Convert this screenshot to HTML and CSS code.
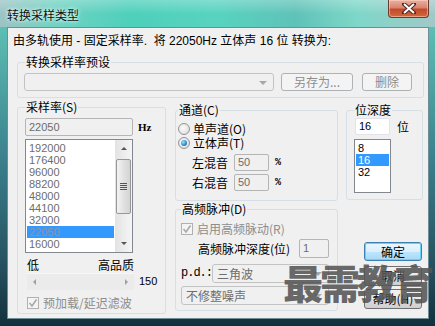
FILE: index.html
```html
<!DOCTYPE html>
<html>
<head>
<meta charset="utf-8">
<link rel="stylesheet" href="styles.css">
</head>
<body>
<div class="window">
  <div class="titlebar">
    <span class="title">转换采样类型</span>
    <div class="close">
      <svg width="14" height="11" viewBox="0 0 14 11">
        <path d="M2 1 L12 10 M12 1 L2 10" stroke="#4a2a24" stroke-width="4" stroke-linecap="square"/>
        <path d="M2 1 L12 10 M12 1 L2 10" stroke="#fff" stroke-width="2"/>
      </svg>
    </div>
  </div>

  <div class="client">
    <div class="msg">由多轨使用 - 固定采样率.&nbsp; 将 22050Hz 立体声 16 位 转换为:</div>

    <fieldset class="preset">
      <legend>转换采样率预设</legend>
      <div class="row">
        <div class="combo off preset-combo"><span class="arrow"></span></div>
        <button class="btn off save">另存为...</button>
        <button class="btn off del">删除</button>
      </div>
    </fieldset>

    <div class="main">
      <fieldset class="rate">
        <legend>采样率(S)</legend>
        <div class="row">
          <div class="field off rate-field">22050</div>
          <span class="unit">Hz</span>
        </div>
        <div class="listbox rate-list">
          <div class="items">
            <div class="item">192000</div>
            <div class="item">176400</div>
            <div class="item">96000</div>
            <div class="item">88200</div>
            <div class="item">48000</div>
            <div class="item">44100</div>
            <div class="item">32000</div>
            <div class="item selected">22050</div>
            <div class="item">16000</div>
          </div>
          <div class="vscroll">
            <div class="sbtn"><span class="tri up"></span></div>
            <div class="thumb"><span class="grip"></span></div>
            <div class="sbtn bottom"><span class="tri down"></span></div>
          </div>
        </div>
        <div class="quality">
          <span>低</span>
          <span>高品质</span>
        </div>
        <div class="row slider-row">
          <div class="hscroll">
            <span class="tri left"></span>
            <span class="tri right"></span>
          </div>
          <span class="value">150</span>
        </div>
        <label class="check off filter">
          <span class="box"><svg width="10" height="10" viewBox="0 0 10 10"><path d="M1.5 5 L4 8 L8.5 1.5" fill="none" stroke="#a9a9a9" stroke-width="1.6"/></svg></span>
          预加载/延迟滤波
        </label>
      </fieldset>

      <div class="col-mid">
        <fieldset class="channel">
          <legend>通道(C)</legend>
          <label class="radio-row"><span class="radio"></span>单声道(O)</label>
          <label class="radio-row"><span class="radio on"></span>立体声(T)</label>
          <div class="mix first">
            <span class="mix-label">左混音</span>
            <div class="field off mix-field">50</div>
            <span class="pct">%</span>
          </div>
          <div class="mix">
            <span class="mix-label">右混音</span>
            <div class="field off mix-field">50</div>
            <span class="pct">%</span>
          </div>
        </fieldset>

        <fieldset class="pulse">
          <legend>高频脉冲(D)</legend>
          <label class="check off dither">
            <span class="box"><svg width="10" height="10" viewBox="0 0 10 10"><path d="M1.5 5 L4 8 L8.5 1.5" fill="none" stroke="#a9a9a9" stroke-width="1.6"/></svg></span>
            启用高频脉动(R)
          </label>
          <div class="row depth-row">
            <span class="depth-label">高频脉冲深度(位)</span>
            <div class="field off depth-field">1</div>
          </div>
          <div class="row pd-row">
            <span class="pd">p.d.:</span>
            <div class="combo off pd-combo">三角波<span class="arrow"></span></div>
          </div>
          <div class="combo off shape-combo">不修整噪声<span class="arrow"></span></div>
        </fieldset>
      </div>

      <div class="col-right">
        <fieldset class="bits">
          <legend>位深度</legend>
          <div class="row">
            <div class="field bits-field">16</div>
            <span class="unit-bit">位</span>
          </div>
          <div class="listbox bits-list">
            <div class="items">
              <div class="item">8</div>
              <div class="item selected">16</div>
              <div class="item">32</div>
            </div>
          </div>
        </fieldset>
        <button class="btn default ok">确定</button>
        <button class="btn cancel">取消</button>
        <button class="btn help">帮助(H)</button>
      </div>
    </div>
  </div>

  <div class="watermark">最需教育</div>
</div>
</body>
</html>
```

FILE: styles.css
```css
* {
  box-sizing: border-box;
}
html, body {
  margin: 0;
  padding: 0;
}
body {
  width: 435px;
  height: 326px;
  overflow: hidden;
  font: 12px/14px "Liberation Sans", "Noto Sans CJK SC", sans-serif;
  color: #000;
}
.window {
  position: relative;
  width: 435px;
  height: 326px;
  padding: 0 6px 7px 7px;
  display: flex;
  flex-direction: column;
  background:
    linear-gradient(180deg, rgba(255,255,255,0.25) 0, rgba(255,255,255,0) 14px),
    linear-gradient(90deg, #9cc4c4 0, #72d2c3 12%, #4ed0bb 30%, #58d3c0 50%, #5fc2b8 68%, #7ed7c8 82%, #a2c8c8 100%);
}
.window::after {
  content: "";
  position: absolute;
  left: 0;
  right: 0;
  top: 27px;
  bottom: 0;
  z-index: 0;
  background: linear-gradient(180deg, #5cbfb4 0, #3a7f8c 45%, #27505f 80%, #12303c 100%);
}

/* title bar */
.titlebar {
  height: 27px;
  display: flex;
  align-items: flex-start;
  margin-right: -6px;
}
.title {
  margin-top: 8px;
  font-family: "Noto Sans CJK SC", sans-serif;
  font-size: 12px;
  line-height: 14px;
  color: #111;
  text-shadow: 0 0 5px #e6fff9, 0 0 3px #e6fff9;
}
.close {
  margin-left: auto;
  margin-right: 6px;
  width: 41px;
  height: 18px;
  border: 1px solid #6b3a30;
  border-top: none;
  border-radius: 0 0 4px 4px;
  background: linear-gradient(180deg, #eab3a3 0, #d98470 45%, #c24a2c 55%, #d2683c 100%);
  box-shadow: inset 0 0 0 1px rgba(255,220,200,0.5);
  display: flex;
  align-items: center;
  justify-content: center;
}

/* client area */
.client {
  position: relative;
  z-index: 1;
  height: 292px;
  background: #f0f0f0;
  border: 1px solid #6f8d97;
  padding: 6px 0 0 5px;
  font-family: "Noto Sans CJK SC", "Liberation Sans", sans-serif;
}
.msg {
  height: 14px;
  white-space: nowrap;
  font-family: "Liberation Sans", "Noto Sans CJK SC", sans-serif;
}
.row {
  display: flex;
  align-items: center;
}

fieldset {
  margin: 0;
  min-width: 0;
  border: 1px solid #d5dfe5;
  border-radius: 3px;
}
legend {
  padding: 0 1px;
  line-height: 14px;
  white-space: nowrap;
}

.preset {
  margin: 7px 0 0 4px;
  width: 407px;
  height: 43px;
  padding: 4px 10px 0 6px;
}
.preset legend {
  margin-left: 1px;
}
.preset-combo {
  width: 250px;
  height: 18px;
}
.save {
  width: 72px;
  height: 18px;
  margin-left: 7px;
}
.del {
  width: 50px;
  height: 18px;
  margin-left: 9px;
}

/* controls */
.field {
  border: 1px solid #abadb3;
  border-radius: 2px;
  background: #fff;
  padding-left: 3px;
  font: 11px/15px "Liberation Sans", sans-serif;
  display: flex;
  align-items: center;
}
.field.off {
  background: #f0f0f0;
  border-color: #b5b5b5;
  color: #6d6d6d;
}
.combo {
  position: relative;
  border: 1px solid #c3c3c3;
  border-radius: 3px;
  background: #f0f0f0;
  color: #6d6d6d;
  padding-left: 4px;
  display: flex;
  align-items: center;
}
.combo .arrow {
  position: absolute;
  right: 6px;
  top: 7px;
  border-left: 4px solid transparent;
  border-right: 4px solid transparent;
  border-top: 4px solid #a8a8a8;
}
.btn {
  font: 12px/14px "Noto Sans CJK SC", sans-serif;
  padding: 0;
  border: 1px solid #707070;
  border-radius: 3px;
  background: linear-gradient(180deg, #f2f2f2 0, #ebebeb 50%, #dddddd 51%, #cfcfcf 100%);
  color: #000;
}
.btn.off {
  border-color: #adb2b5;
  background: #f4f4f4;
  color: #8d8d8d;
}
.btn.default {
  border-color: #3c7fb1;
  background: linear-gradient(180deg, #eaf6fd 0, #d9f0fc 50%, #bee6fd 51%, #a7d9f5 100%);
  box-shadow: inset 0 0 0 1px #6fd0f7;
}

.listbox {
  border: 1px solid #828790;
  background: #fff;
  display: flex;
}
.items {
  flex: 1;
  padding: 2px 1px 0 1px;
  font: 11px/12px "Liberation Sans", sans-serif;
}
.item {
  height: 12px;
  padding-left: 2px;
}
.rate-list .item {
  color: #6d6d6d;
}
.item.selected {
  background: #3399ff;
}
.rate-list .item.selected {
  color: #8a95a5;
}
.bits-list .item.selected {
  color: #fff;
}

.check {
  display: flex;
  align-items: center;
  white-space: nowrap;
}
.check.off {
  color: #8d8d8d;
}
.check .box {
  width: 12px;
  height: 12px;
  border: 1px solid #b1b1b1;
  background: #f4f4f4;
  margin-right: 4px;
  display: flex;
  align-items: center;
  justify-content: center;
}

.tri {
  width: 0;
  height: 0;
  display: block;
}
.tri.up {
  border-left: 3px solid transparent;
  border-right: 3px solid transparent;
  border-bottom: 3px solid #555;
}
.tri.down {
  border-left: 3px solid transparent;
  border-right: 3px solid transparent;
  border-top: 3px solid #555;
}
.tri.left {
  border-top: 3px solid transparent;
  border-bottom: 3px solid transparent;
  border-right: 3px solid #a0a0a0;
}
.tri.right {
  border-top: 3px solid transparent;
  border-bottom: 3px solid transparent;
  border-left: 3px solid #a0a0a0;
}

/* main area */
.main {
  display: flex;
  margin: 2px 0 0 4px;
}
.rate {
  width: 149px;
  height: 214px;
  padding: 4px 0 0 7px;
}
.rate legend,
.channel legend,
.pulse legend {
  margin-left: 0;
}
.rate-field {
  width: 108px;
  height: 18px;
}
.unit {
  margin-left: 5px;
  font: bold 11px/18px "Liberation Serif", serif;
}
.rate-list {
  width: 108px;
  height: 114px;
  margin-top: 3px;
}
.vscroll {
  width: 17px;
  display: flex;
  flex-direction: column;
  background: linear-gradient(90deg, #e3e3e3, #f5f5f5);
}
.sbtn {
  height: 17px;
  display: flex;
  align-items: center;
  justify-content: center;
}
.sbtn.bottom {
  margin-top: auto;
}
.thumb {
  margin: 2px 1px 0 1px;
  height: 55px;
  border: 1px solid #979797;
  border-radius: 2px;
  background: linear-gradient(90deg, #f3f3f3, #e2e2e2 50%, #d3d3d3);
  display: flex;
  align-items: center;
  justify-content: center;
}
.grip {
  width: 7px;
  height: 7px;
  background: repeating-linear-gradient(180deg, #555 0, #555 1px, transparent 1px, transparent 2px);
}
.quality {
  display: flex;
  justify-content: space-between;
  width: 107px;
  margin: 5px 0 0 2px;
}
.slider-row {
  margin: 1px 0 0 2px;
}
.hscroll {
  width: 107px;
  height: 17px;
  background: #ebebeb;
  border-top: 1px solid #f7f7f7;
  display: flex;
  align-items: center;
  justify-content: space-between;
  padding: 0 6px;
}
.value {
  margin-left: 5px;
  font: 11px/17px "Liberation Sans", sans-serif;
}
.filter {
  margin: 6px 0 0 2px;
}

.col-mid {
  margin: 3px 0 0 9px;
  width: 163px;
}
.channel {
  height: 98px;
  padding: 5px 0 0 2px;
}
.radio-row {
  display: flex;
  align-items: center;
  height: 14px;
}
.radio {
  width: 12px;
  height: 12px;
  border-radius: 50%;
  border: 1px solid #939393;
  background: radial-gradient(circle at 40% 40%, #fbfbfb, #d8d8d8);
  margin-right: 3px;
  position: relative;
}
.radio.on::after {
  content: "";
  position: absolute;
  left: 2px;
  top: 2px;
  width: 6px;
  height: 6px;
  border-radius: 50%;
  background: radial-gradient(circle at 35% 35%, #9ee0ff, #2b8ad0 60%, #16508a);
}
.mix {
  display: flex;
  align-items: center;
  margin-top: 3px;
}
.mix.first {
  margin-top: 4px;
}
.mix-label {
  margin-left: 14px;
  width: 36px;
}
.mix-field {
  margin-left: 6px;
  width: 35px;
  height: 17px;
}
.pct {
  margin-left: 6px;
  font: bold 10px/17px "Liberation Mono", monospace;
}
.pulse {
  margin-top: 1px;
  height: 109px;
  padding: 6px 8px 0 5px;
}
.depth-row {
  margin-top: 3px;
}
.depth-label {
  margin-left: 17px;
}
.depth-field {
  margin-left: auto;
  width: 30px;
  height: 19px;
}
.pd-row {
  margin-top: 6px;
}
.pd {
  font: 12px/19px "Liberation Mono", monospace;
  letter-spacing: -1px;
}
.pd-combo {
  margin-left: auto;
  width: 119px;
  height: 19px;
}
.shape-combo {
  margin-top: 3px;
  width: 148px;
  height: 19px;
}

.col-right {
  margin: 3px 0 0 8px;
  width: 77px;
  display: flex;
  flex-direction: column;
}
.bits {
  height: 97px;
  padding: 1px 0 0 7px;
}
.bits legend {
  margin-left: 0;
}
.bits-field {
  margin-left: 1px;
  width: 35px;
  height: 17px;
  border-color: #e2e3ea;
}
.unit-bit {
  margin-left: 7px;
}
.bits-list {
  margin-top: 4px;
  width: 37px;
  height: 54px;
}
.bits-list .items {
  padding-top: 2px;
}
.ok,
.cancel,
.help {
  margin-left: 18px;
  width: 58px;
}
.ok {
  margin-top: 42px;
  height: 19px;
}
.cancel {
  margin-top: 5px;
  height: 20px;
}
.help {
  margin-top: 3px;
  height: 20px;
}

.watermark {
  position: absolute;
  z-index: 2;
  left: 283px;
  top: 259px;
  font: 900 40px/46px "Noto Sans CJK SC", sans-serif;
  letter-spacing: -3px;
  color: rgba(85, 85, 85, 0.88);
  white-space: nowrap;
}
```
